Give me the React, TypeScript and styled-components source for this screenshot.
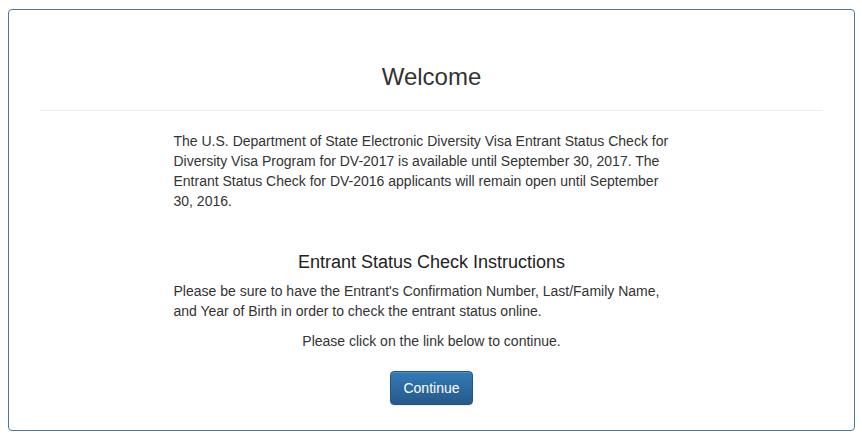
import React from "react";
import styled, { createGlobalStyle } from "styled-components";

const Global = createGlobalStyle`
  html, body { margin: 0; padding: 0; background: #fff; }
  body {
    font-family: "Liberation Sans", Arial, sans-serif;
    font-size: 14px;
    line-height: 20px;
    color: #333;
  }
`;

const Page = styled.div`
  padding: 9px 7px 8px 8px;
`;

const Panel = styled.section`
  border: 1px solid #4a76a0;
  border-radius: 4px;
  height: 422px;
  box-sizing: border-box;
  padding: 54px 31px 0;
  display: flex;
  flex-direction: column;
  align-items: center;
`;

const Title = styled.h1`
  margin: 0;
  font-size: 24px;
  font-weight: 400;
  line-height: 26px;
  text-align: center;
`;

const Rule = styled.hr`
  align-self: stretch;
  margin: 20px 0 20px;
  border: 0;
  border-top: 1px solid #eee;
`;

const Column = styled.div`
  width: 516px;
  display: flex;
  flex-direction: column;
`;

const Para = styled.p<{ $center?: boolean; $mt?: number }>`
  margin: ${(p) => p.$mt ?? 0}px 0 0;
  padding-right: ${(p) => (p.$center ? 0 : 8)}px;
  text-align: ${(p) => (p.$center ? "center" : "left")};
`;

const SubTitle = styled.h2`
  margin: 41px 0 9px;
  font-size: 18px;
  font-weight: 400;
  line-height: 20px;
  text-align: center;
  color: #222;
`;

const Button = styled.button`
  align-self: center;
  margin-top: 20px;
  font-family: "Liberation Sans", Arial, sans-serif;
  font-size: 14px;
  line-height: 20px;
  padding: 6px 12px;
  color: #fff;
  border: 1px solid #245580;
  border-radius: 4px;
  background-image: linear-gradient(to bottom, #337ab7 0, #265a88 100%);
  box-shadow: inset 0 1px 0 rgba(255, 255, 255, 0.15), 0 1px 1px rgba(0, 0, 0, 0.075);
  cursor: pointer;
`;

export default function App() {
  return (
    <>
      <Global />
      <Page>
        <Panel>
          <Title>Welcome</Title>
          <Rule />
          <Column>
            <Para>
              The U.S. Department of State Electronic Diversity Visa Entrant Status Check for
              Diversity Visa Program for DV-2017 is available until September 30, 2017. The
              Entrant Status Check for DV-2016 applicants will remain open until September
              30, 2016.
            </Para>
            <SubTitle>Entrant Status Check Instructions</SubTitle>
            <Para>
              Please be sure to have the Entrant's Confirmation Number, Last/Family Name,
              and Year of Birth in order to check the entrant status online.
            </Para>
            <Para $center $mt={10}>Please click on the link below to continue.</Para>
            <Button type="button">Continue</Button>
          </Column>
        </Panel>
      </Page>
    </>
  );
}
